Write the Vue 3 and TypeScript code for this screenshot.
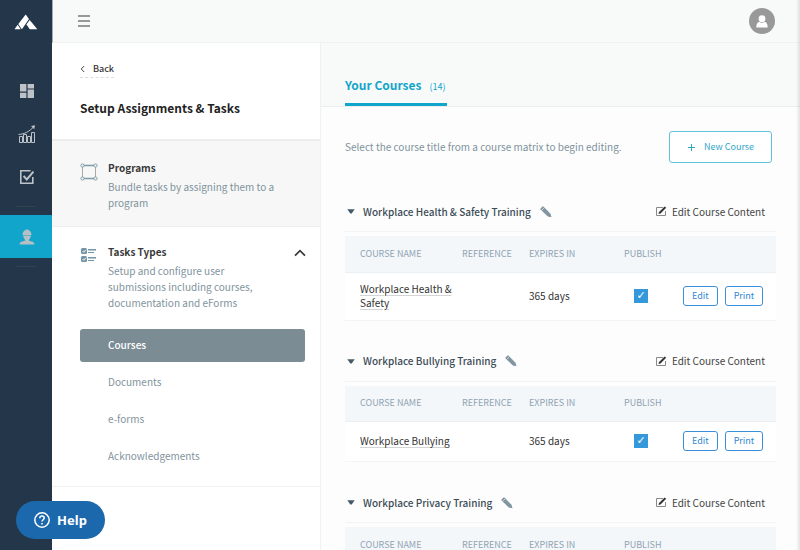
<script setup lang="ts">
import { ref } from 'vue'

interface Course {
  name: string
  expires: string
  published: boolean
}

interface CourseGroup {
  id: string
  title: string
  courses: Course[]
}

const taskTypes = ['Courses', 'Documents', 'e-forms', 'Acknowledgements']
const activeType = ref('Courses')
const typesOpen = ref(true)

const groups = ref<CourseGroup[]>([
  {
    id: 'health',
    title: 'Workplace Health & Safety Training',
    courses: [{ name: 'Workplace Health & Safety', expires: '365 days', published: true }],
  },
  {
    id: 'bullying',
    title: 'Workplace Bullying Training',
    courses: [{ name: 'Workplace Bullying', expires: '365 days', published: true }],
  },
  {
    id: 'privacy',
    title: 'Workplace Privacy Training',
    courses: [{ name: 'Workplace Privacy', expires: '365 days', published: true }],
  },
])
</script>

<template>
  <div class="app">
    <nav class="rail" aria-label="Main">
      <a class="logo" href="#" aria-label="Home">
        <svg width="24" height="16" viewBox="0 0 24 16" fill="#fff">
          <path d="M3.700 10.800 6.600 15.200H.5z" />
          <path d="M4.300 9.900 11.700.6 15 5 8.500 14.600 7.500 15z" />
          <path d="M15.700 5.900 23.300 15.200H15.800L12.400 10.600z" />
        </svg>
      </a>
      <a class="rail-link" href="#" aria-label="Dashboard">
        <svg width="14" height="14" viewBox="0 0 14 14" fill="#bcc2c7">
          <path d="M0 0h6.4v7.6H0zM7.6 0H14v4.4H7.6zM0 8.8h6.4V14H0zM7.6 5.6H14V14H7.6z" />
        </svg>
      </a>
      <a class="rail-link" href="#" aria-label="Reports">
        <svg width="18" height="18" viewBox="0 0 18 18" fill="none" stroke="#bcc2c7">
          <path d="M1.500 11.500h3v6h-3zM5.500 9.500h3v8h-3zM9.500 11.500h3v6h-3zM13.500 7.500h3v10h-3z" />
          <path d="M.5 9.500C7 9 11 6.500 15.500 2" />
          <path d="M13 1l4-.8-.8 4z" fill="#bcc2c7" stroke="none" />
        </svg>
      </a>
      <a class="rail-link" href="#" aria-label="Tasks">
        <svg width="14" height="14" viewBox="0 0 14 14" fill="none" stroke="#bcc2c7" stroke-width="1.600">
          <path d="M10.500 .8H.8v12.400h12V7" />
          <path d="M3.600 6l3.200 3.400L13.400 1.600" stroke-width="2" />
        </svg>
      </a>
      <span class="rail-line"></span>
      <a class="rail-link active" href="#" aria-label="Assignments">
        <svg width="16" height="16" viewBox="0 0 16 16" fill="#b5bfc4">
          <path d="M3.600 5.400C3.800 3 5 1.500 6.600 1.100L7 .4h2l.4.7c1.600.4 2.800 1.900 3 4.300l.6.700H3z" />
          <path d="M4.200 6.600h7.600c0 1.800-.8 3-1.800 4v1.200c2.800.5 5.300 1.200 5.500 3.800H.5c.2-2.600 2.700-3.300 5.500-3.800v-1.200c-1-1-1.800-2.200-1.800-4z" />
        </svg>
      </a>
      <span class="rail-line"></span>
    </nav>

    <div class="shell">
      <header class="topbar">
        <button class="menu" type="button" aria-label="Toggle menu"><i></i><i></i><i></i></button>
        <button class="avatar" type="button" aria-label="Account">
          <svg width="12" height="13" viewBox="0 0 12 13" fill="#fff">
            <circle cx="6" cy="3.700" r="3.400" />
            <path d="M3.200 6.800c1.600 1.400 4 1.400 5.600 0 2 .8 2.900 2.500 2.900 5.700H.3c0-3.200.9-4.900 2.900-5.700z" />
          </svg>
        </button>
      </header>

      <div class="body">
        <aside class="panel">
          <div class="panel-head">
            <a class="back" href="#">
              <svg width="5" height="8" viewBox="0 0 5 8" fill="none" stroke="#444"><path d="M4.200 1 1.200 4l3 3" /></svg>
              <span>Back</span>
            </a>
            <h1>Setup Assignments &amp; Tasks</h1>
          </div>

          <section class="item programs">
            <svg class="item-icon" width="18" height="18" viewBox="0 0 18 18" fill="none" stroke="#7f9aa8">
              <path d="M4 2.500h10M4 15.500h10" stroke-width="1.500" />
              <path d="M2.500 4v10M15.500 4v10" stroke="#a9a9a9" />
              <circle cx="2.500" cy="2.500" r="1.600" /><circle cx="15.500" cy="2.500" r="1.600" />
              <circle cx="2.500" cy="15.500" r="1.600" /><circle cx="15.500" cy="15.500" r="1.600" />
            </svg>
            <div class="item-text">
              <h2>Programs</h2>
              <p>Bundle tasks by assigning them to a program</p>
            </div>
          </section>

          <section class="item types">
            <svg class="item-icon" width="18" height="16" viewBox="0 0 18 16" fill="#7394a5">
              <rect x="1" y="1" width="6" height="6" rx="1.500" /><rect x="1" y="9" width="6" height="6" rx="1.500" />
              <path d="M8 2h8v1.500H8zM8 5h6v1H8zM8 10h8v1.500H8zM8 13h6v1H8z" />
              <path d="M2.500 4l1.200 1.200L5.800 2.800M2.500 12l1.200 1.200 2.100-2.400" fill="none" stroke="#fff" />
            </svg>
            <div class="item-text">
              <h2>Tasks Types</h2>
              <p>Setup and configure user submissions including courses, documentation and eForms</p>
            </div>
            <button class="collapse" type="button" aria-label="Toggle task types" @click="typesOpen = !typesOpen">
              <svg width="12" height="8" viewBox="0 0 12 8" fill="none" stroke="#3a3a3a" stroke-width="1.700"><path d="M1 6.700 6 1.700l5 5" /></svg>
            </button>
          </section>
          <ul v-if="typesOpen" class="type-list">
            <li v-for="type in taskTypes" :key="type">
              <a href="#" :class="{ current: type === activeType }" @click.prevent="activeType = type">{{ type }}</a>
            </li>
          </ul>
        </aside>

        <main class="main">
          <div class="tabs">
            <a class="tab" href="#"><strong>Your Courses</strong><span>(14)</span></a>
          </div>
          <div class="content">
            <div class="intro">
              <p>Select the course title from a course matrix to begin editing.</p>
              <button class="new-course" type="button">
                <svg width="8" height="8" viewBox="0 0 8 8" stroke="#2fa6c9"><path d="M4.500 1v7M1 4.500h7" /></svg>
                <span>New Course</span>
              </button>
            </div>

            <section v-for="group in groups" :key="group.id" class="group">
              <header class="group-head">
                <svg class="caret" width="8" height="5" viewBox="0 0 8 5" fill="#455a68"><path d="M.3.300h7.400L4.700 4.400H3.300z" /></svg>
                <h3>{{ group.title }}</h3>
                <button class="rename" type="button" :aria-label="`Rename ${group.title}`">
                  <svg width="12" height="12" viewBox="0 0 12 12" fill="#8296a1">
                    <path d="M.6 2.400 2.400.6q.5-.4 1 0L10.500 7.700l1 3.600-3.700-.9L.6 3.400q-.4-.5 0-1z" />
                    <path d="M1.800 4.200l2.400-2.400" stroke="#fdfdfd" stroke-width=".6" />
                  </svg>
                </button>
                <a class="edit-content" href="#">
                  <svg width="12" height="11" viewBox="0 0 12 11" fill="none">
                    <path d="M8 1.500H1.500v8h9V5" stroke="#85898c" />
                    <path d="M3.500 8 4 6 9.700.4l1.500 1.400L5.500 7.500z" fill="#333" />
                  </svg>
                  <span>Edit Course Content</span>
                </a>
              </header>
              <table>
                <colgroup>
                  <col class="c-name" /><col class="c-ref" /><col class="c-exp" /><col class="c-pub" /><col />
                </colgroup>
                <thead>
                  <tr>
                    <th scope="col">COURSE NAME</th>
                    <th scope="col">REFERENCE</th>
                    <th scope="col">EXPIRES IN</th>
                    <th scope="col">PUBLISH</th>
                    <td></td>
                  </tr>
                </thead>
                <tbody>
                  <tr v-for="course in group.courses" :key="course.name">
                    <td><a class="course" href="#">{{ course.name }}</a></td>
                    <td></td>
                    <td>{{ course.expires }}</td>
                    <td class="publish">
                      <input v-model="course.published" type="checkbox" :aria-label="`Publish ${course.name}`" />
                    </td>
                    <td>
                      <div class="actions">
                        <button type="button">Edit</button>
                        <button type="button">Print</button>
                      </div>
                    </td>
                  </tr>
                </tbody>
              </table>
            </section>
          </div>
        </main>
      </div>
    </div>

    <button class="help" type="button">
      <svg width="16" height="16" viewBox="0 0 16 16" fill="none" stroke="#fff" stroke-width="1.500">
        <circle cx="8" cy="8" r="7.200" />
        <path d="M5.800 6.300c0-3 4.400-2.800 4.400-.2 0 1.600-2.200 1.700-2.200 3.500" />
        <path d="M8 10.900v1.500" />
      </svg>
      <span>Help</span>
    </button>
  </div>
</template>

<style>
body {
  margin: 0;
}
</style>

<style scoped>
* {
  box-sizing: border-box;
}
.app {
  position: relative;
  display: flex;
  height: 100vh;
  overflow: hidden;
  background: #fdfdfd;
  color: #333;
  font: 10px/16px 'Noto Sans CJK SC', 'Noto Sans', sans-serif;
}
.app::after {
  content: '';
  position: absolute;
  inset: 0 0 0 auto;
  width: 4px;
  background: linear-gradient(to right, transparent, rgba(0, 0, 0, 0.1));
  pointer-events: none;
}
h1, h2, h3, p, ul {
  margin: 0;
  padding: 0;
}
a {
  color: inherit;
  text-decoration: none;
}
button {
  margin: 0;
  padding: 0;
  border: 0;
  background: none;
  color: inherit;
  font: inherit;
  cursor: pointer;
}
svg {
  display: block;
  flex: none;
}

.rail {
  flex: none;
  display: flex;
  flex-direction: column;
  align-items: center;
  width: 52px;
  background: #24364a;
}
.logo {
  display: flex;
  align-items: center;
  height: 43px;
  margin-bottom: 26px;
}
.rail-link {
  display: flex;
  align-items: center;
  justify-content: center;
  width: 100%;
  height: 43px;
  padding-left: 2px;
}
.rail-link.active {
  background: #12a5cc;
}
.rail-line {
  width: 20px;
  height: 1px;
  margin: 8px 0;
  background: #2e4350;
}

.shell {
  flex: 1;
  display: flex;
  flex-direction: column;
  min-width: 0;
}
.topbar {
  flex: none;
  display: flex;
  align-items: center;
  justify-content: space-between;
  height: 43px;
  padding: 0 25px;
  border-bottom: 1px solid #f0f1f1;
  border-left: 1px solid #a3abb4;
  background: #f8faf9;
}
.menu {
  display: grid;
  gap: 3px;
  width: 12px;
}
.menu i {
  height: 2px;
  background: #999;
}
.avatar {
  display: grid;
  place-items: center;
  width: 26px;
  height: 26px;
  border-radius: 50%;
  background: #999;
}

.body {
  flex: 1;
  display: flex;
  min-height: 0;
}
.panel {
  flex: none;
  width: 269px;
  overflow: hidden;
  border-right: 1px solid #f1f1f1;
  background: #fff;
}
.panel-head {
  height: 98px;
  padding: 18px 28px 0;
  border-bottom: 2px solid #ededed;
}
.back {
  display: inline-flex;
  align-items: center;
  gap: 8px;
  border-bottom: 1px dashed #ddd;
  font-size: 9px;
  font-weight: 500;
}
h1 {
  margin-top: 20px;
  color: #222;
  font-size: 12px;
  font-weight: 700;
  line-height: 20px;
}
.item {
  display: flex;
  padding-left: 28px;
}
.item-icon {
  margin-top: 3px;
}
.item-text {
  width: 172px;
  margin-left: 10px;
  color: #7f939d;
}
h2 {
  margin-bottom: 3px;
  color: #3a3a3a;
  font-size: 10px;
  font-weight: 700;
}
.programs {
  height: 86px;
  padding-top: 19px;
  border-bottom: 1px solid #eee;
  background: #f7f7f7;
}
.types {
  padding-top: 17px;
}
.collapse {
  align-self: flex-start;
  margin: 5px 0 0 14px;
}
.type-list {
  display: grid;
  gap: 4px;
  padding: 18px 15px 13px 28px;
  border-bottom: 1px solid #f1f1f1;
  list-style: none;
}
.type-list a {
  display: block;
  padding: 8px 28px 9px;
  border-radius: 3px;
  color: #7f939d;
}
.type-list a.current {
  background: #7b8c95;
  color: #fff;
  font-weight: 500;
}

.main {
  flex: 1;
  display: flex;
  flex-direction: column;
  min-width: 0;
}
.tabs {
  flex: none;
  display: flex;
  align-items: flex-end;
  height: 64px;
  padding: 0 24px;
  border-bottom: 1px solid #eceeee;
  background: #f8faf9;
}
.tab {
  display: flex;
  align-items: baseline;
  gap: 8px;
  padding: 0 2px 6px 0;
  border-bottom: 3px solid #12a5cc;
  color: #12a5cc;
  font-size: 9px;
  line-height: 20px;
}
.tab strong {
  font-size: 12px;
  font-weight: 700;
}
.content {
  flex: 1;
  min-height: 0;
  padding: 24px 24px 0;
  overflow-y: auto;
  scrollbar-width: none;
}
.intro {
  display: flex;
  align-items: center;
  justify-content: space-between;
  margin-bottom: 29px;
  padding-right: 4px;
  color: #7f939d;
}
.new-course {
  display: flex;
  align-items: center;
  justify-content: center;
  gap: 9px;
  width: 103px;
  height: 32px;
  border: 1px solid #5fc2da;
  border-radius: 3px;
  background: #fff;
  color: #2fa6c9;
  font-size: 9px;
}
.group {
  margin-bottom: 21px;
}
.group-head {
  display: flex;
  align-items: center;
  height: 40px;
  margin-bottom: 4px;
  padding: 0 11px 0 2px;
  border-bottom: 1px solid #f4f4f4;
}
h3 {
  margin: 0 9px 0 8px;
  color: #3c4c57;
  font-size: 10px;
  font-weight: 500;
}
.edit-content {
  display: flex;
  align-items: center;
  gap: 5px;
  margin-left: auto;
  color: #444;
}
table {
  width: 100%;
  border-collapse: collapse;
  table-layout: fixed;
  background: #fff;
}
.c-name { width: 117px; }
.c-ref { width: 67px; }
.c-exp { width: 95px; }
.c-pub { width: 59px; }
th,
td {
  padding: 0;
  text-align: left;
}
tr > :first-child {
  padding-left: 15px;
}
thead tr {
  height: 36px;
  border-bottom: 1px solid #e9eff2;
  background: #f3f7fa;
}
th {
  color: #92a3b3;
  font-size: 9px;
  font-weight: 400;
}
tbody td {
  padding: 9px 0 10px;
  border-bottom: 1px solid #f4f4f4;
  line-height: 14px;
}
.course {
  text-decoration: underline #d4d4d4 1px;
  text-underline-offset: 2px;
}
.publish {
  padding-left: 10px;
}
input {
  display: grid;
  place-items: center;
  width: 14px;
  height: 14px;
  margin: 0;
  appearance: none;
  border: 1px solid #3498db;
  background: #fff;
}
input:checked {
  background: #3498db;
}
input:checked::before {
  content: '✓';
  color: #fff;
  font: 11px/12px 'DejaVu Sans', sans-serif;
}
.actions {
  display: flex;
  gap: 7px;
}
.actions button {
  height: 20px;
  padding: 0 8px;
  border: 1px solid #3a8fd8;
  border-radius: 3px;
  color: #2f86d2;
  font-size: 9px;
}

.help {
  position: absolute;
  bottom: 11px;
  left: 16px;
  display: flex;
  align-items: center;
  justify-content: center;
  gap: 7px;
  width: 89px;
  height: 38px;
  border-radius: 19px;
  background: #1b68ac;
  color: #fff;
  font: 700 13px/20px 'Noto Sans', sans-serif;
}
</style>
